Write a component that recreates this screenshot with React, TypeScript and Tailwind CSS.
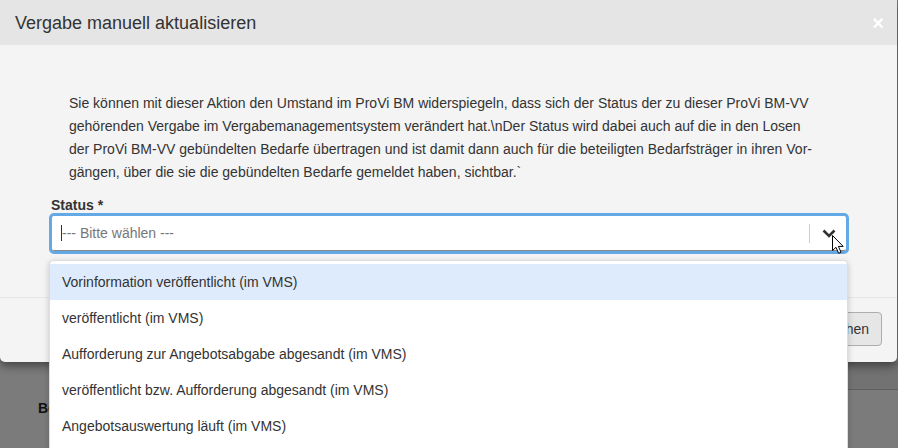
import React from "react";

const options = [
  "Vorinformation veröffentlicht (im VMS)",
  "veröffentlicht (im VMS)",
  "Aufforderung zur Angebotsabgabe abgesandt (im VMS)",
  "veröffentlicht bzw. Aufforderung abgesandt (im VMS)",
  "Angebotsauswertung läuft (im VMS)",
];

export default function App() {
  return (
    <div className="relative w-[898px] h-[448px] overflow-hidden bg-[#7b7b7b] font-['Liberation_Sans',Arial,sans-serif] text-[#333]">
      {/* Modal */}
      <div className="relative z-10 w-[897px] rounded-b-[5px] bg-[#f4f4f4] shadow-[0_4px_10px_rgba(0,0,0,0.45)]">
        <div className="flex h-[45px] items-center justify-between bg-[#e5e5e5] pl-[15px] pr-[13px]">
          <div className="text-[18px] leading-[20px] text-[#333]">Vergabe manuell aktualisieren</div>
          <div className="text-[20px] font-bold leading-none text-white">×</div>
        </div>
        <div className="h-[252px] pl-[49px] pt-[47px]">
          <p className="w-[800px] whitespace-nowrap pl-[20px] text-[14px] leading-[23px] text-[#333]">
            Sie können mit dieser Aktion den Umstand im ProVi BM widerspiegeln, dass sich der Status der zu dieser ProVi BM-VV
            <br />
            gehörenden Vergabe im Vergabemanagementsystem verändert hat.\nDer Status wird dabei auch auf die in den Losen
            <br />
            der ProVi BM-VV gebündelten Bedarfe übertragen und ist damit dann auch für die beteiligten Bedarfsträger in ihren Vor-
            <br />
            gängen, über die sie die gebündelten Bedarfe gemeldet haben, sichtbar.`
          </p>
          <div className="mt-[11px] pl-[2px] text-[14px] font-bold leading-[20px] text-[#333]">Status *</div>
          <div className="mt-[-2px] w-[800px] h-[41px] rounded-[5px] border-[3px] border-[#63a9e5] bg-white">
            <div className="flex h-full items-center rounded-[2px] border-b border-[#8a8a8a] pl-[9px] pr-[8px]">
              <span className="h-[16px] w-px bg-[#333]" />
              <span className="flex-1 text-[14px] text-[#777]">--- Bitte wählen ---</span>
              <span className="h-[19px] w-px bg-[#ccc]" />
              <span className="ml-[11px] mr-[1px] flex w-[16px] items-center justify-center">
                <svg width="14" height="9" viewBox="0 0 14 9">
                  <path d="M1.5 1.5 L7 7 L12.5 1.5" fill="none" stroke="#333" strokeWidth="2.6" />
                </svg>
              </span>
            </div>
          </div>
        </div>
        <div className="flex h-[65px] justify-end border-t border-[#e5e5e5] pr-[15px] pt-[14px]">
          <button className="h-[34px] rounded-[4px] border border-[#adadad] bg-[#e6e6e6] px-[12px] text-[14px] text-[#333]">
            Abbrechen
          </button>
        </div>
      </div>

      {/* Background page (dimmed) */}
      <div className="ml-[420px] h-[28px] border-b border-[#5f5f5f] bg-[#727272]" />
      <div className="pl-[38px] pt-[8px] text-[14px] font-bold leading-[20px] text-[#111]">Bedarfsträger</div>

      {/* Dropdown menu */}
      <div className="absolute left-[49px] top-[260px] z-20 h-[200px] w-[799px] rounded-t-[4px] border border-[#ddd] bg-white pt-[3px] shadow-[0_2px_6px_rgba(0,0,0,0.2)]">
        {options.map((o, i) => (
          <div
            key={o}
            className={
              i === 0
                ? "flex h-[36px] items-center bg-[#deebfc] pl-[12px] text-[14px] text-[#333]"
                : "flex h-[36px] items-center pl-[12px] text-[14px] text-[#333]"
            }
          >
            {o}
          </div>
        ))}
      </div>

      {/* Mouse cursor */}
      <svg className="absolute left-[832px] top-[235px] z-30" width="13" height="20" viewBox="0 0 13 20">
        <path d="M0.5 0.5 L0.5 15.5 L4 12.3 L6.6 18.3 L9 17.2 L6.4 11.4 L11.2 11.4 Z" fill="white" stroke="black" strokeWidth="1" strokeLinejoin="round" />
      </svg>
    </div>
  );
}
